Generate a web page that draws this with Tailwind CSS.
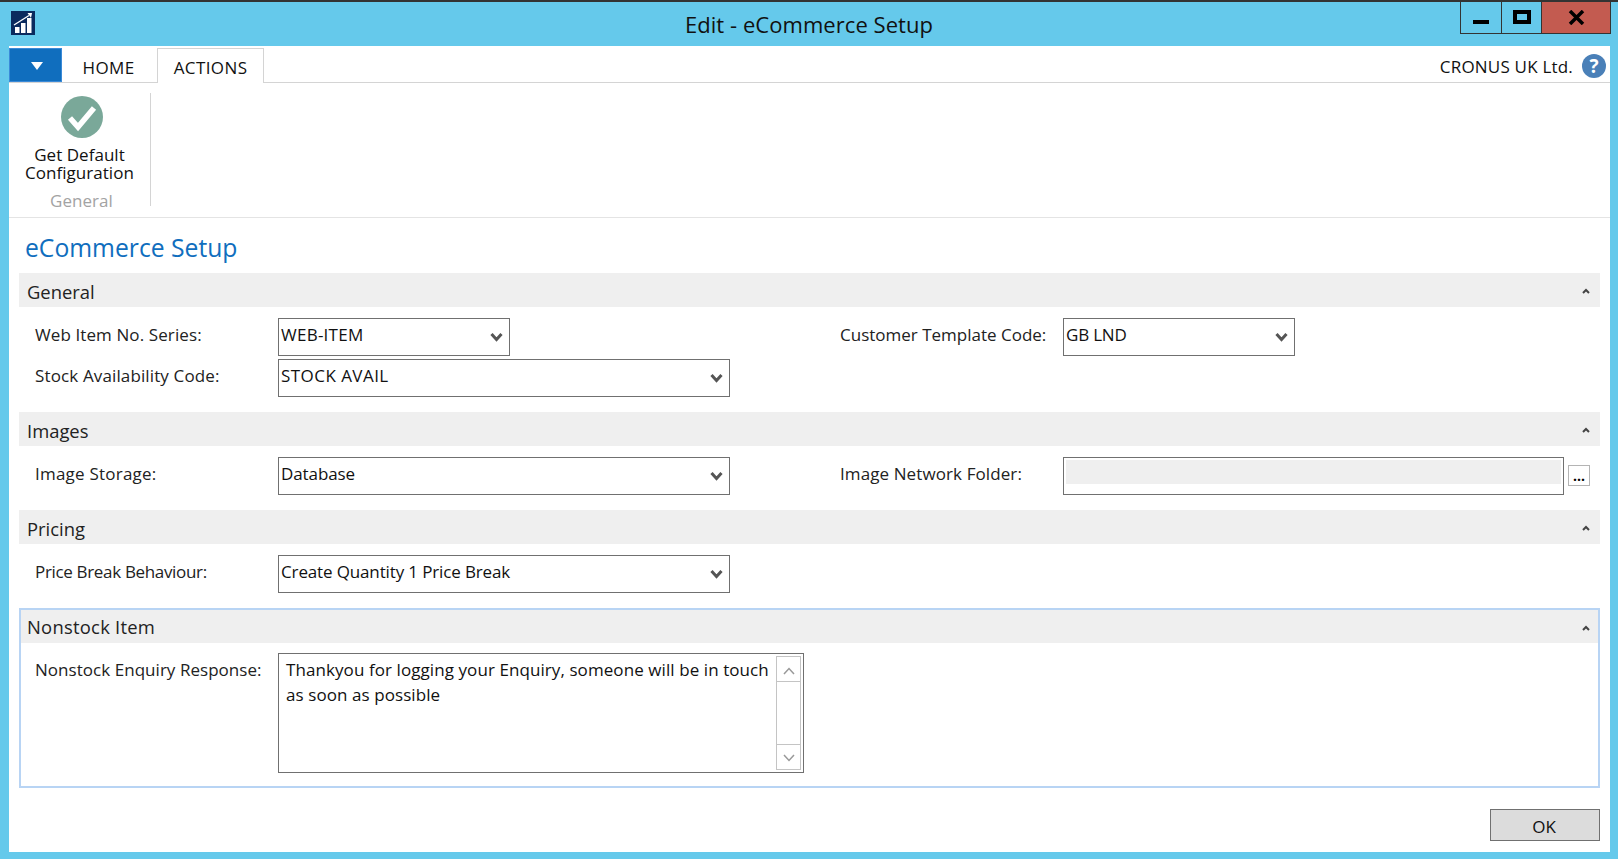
<!doctype html>
<html lang="en">

<head>
    <meta charset="UTF-8">
    <title>Edit - eCommerce Setup</title>
    <script src="https://cdn.jsdelivr.net/npm/@tailwindcss/browser@4"></script>
</head>

<body>
    <div class="w-[1618px] h-[859px] overflow-hidden flex flex-col bg-[#65c9eb] border-t-2 border-[#333333] font-['Open_Sans',sans-serif] text-[17px] text-[#222222]">
        <!-- title bar -->
        <div class="h-[44px] grid grid-cols-[1fr_auto_1fr] shrink-0">
            <div class="pl-[11px] pt-[9px]">
                <svg width="24" height="24" viewBox="0 0 24 24">
                    <rect width="24" height="24" fill="#0a2a5e" />
                    <rect x="4" y="16" width="4.500" height="6" fill="#fff" />
                    <rect x="10" y="12" width="4.500" height="10" fill="#fff" />
                    <rect x="16" y="7" width="4.500" height="15" fill="#fff" />
                    <path d="M3 14 L18 4.500" stroke="#fff" stroke-width="1.300" fill="none" />
                    <path d="M16.500 2 L21 2 L20 7 Z" fill="#fff" />
                </svg>
            </div>
            <div class="text-[22px] tracking-[0.05px] text-[#111111] leading-[45px]">Edit - eCommerce Setup</div>
            <div class="flex justify-end items-start pr-[7px]">
                <div class="w-[42px] h-[32px] border border-[#333333] border-t-0 flex justify-center items-start pt-[18px]">
                    <div class="w-[16px] h-[4px] bg-black"></div>
                </div>
                <div class="w-[39px] h-[32px] border-b border-[#333333] flex justify-center items-start pt-[8px]">
                    <div class="w-[18px] h-[14px] border-[4px] border-black"></div>
                </div>
                <div class="w-[70px] h-[32px] bg-[#c35b50] border border-t-0 border-[#333333] flex justify-center items-start pt-[8px]">
                    <svg width="17" height="15" viewBox="0 0 17 15">
                        <path d="M2 1 L15 14 M15 1 L2 14" stroke="#000" stroke-width="3.500" fill="none" />
                    </svg>
                </div>
            </div>
        </div>

        <!-- window body -->
        <div class="ml-[9px] mr-[8px] h-[806px] bg-white flex flex-col shrink-0">
            <!-- tabs -->
            <div class="h-[37px] pt-[2px] flex items-stretch border-b border-[#d4d4d4] shrink-0">
                <div class="w-[53px] bg-[#106ebe] border border-[#3a8ad8] flex items-center justify-center">
                    <svg width="12" height="8" viewBox="0 0 12 8" class="ml-[2px] mt-[2px]"><path d="M0 0 H12 L6 8 Z" fill="#fff" /></svg>
                </div>
                <div class="w-[93px] mr-[2px] text-center leading-[39px] tracking-[0.4px] text-[#111111]">HOME</div>
                <div class="w-[107px] h-[35px] text-center leading-[38px] tracking-[0.4px] text-[#111111] bg-white border border-b-0 border-[#d4d4d4]">ACTIONS</div>
                <div class="flex-1 flex justify-end items-start pr-[4px]">
                    <span class="leading-[38px] tracking-[0.2px] text-[#111111]">CRONUS UK Ltd.</span>
                    <span class="ml-[9px] mt-[6px] w-[24px] h-[24px] rounded-full bg-[#4a80b8] text-white text-[19px] font-bold leading-[24px] text-center">?</span>
                </div>
            </div>

            <!-- ribbon -->
            <div class="h-[135px] flex border-b border-[#e4e4e4] shrink-0">
                <div class="w-[141px] pt-[13px] flex flex-col items-center">
                    <svg width="42" height="42" viewBox="0 0 42 42" class="ml-[5px] shrink-0">
                        <circle cx="21" cy="21" r="21" fill="#7aa899" />
                        <path d="M9 22 L17 31 L33 12" stroke="#fff" stroke-width="5.500" fill="none" />
                    </svg>
                    <div class="mt-[8px] text-center leading-[18px] tracking-[0.03px] text-[#111111]">Get Default<br>Configuration</div>
                    <div class="mt-[9px] ml-[4px] text-[#a3a3a3] leading-[19px] tracking-[0.05px]">General</div>
                </div>
                <div class="w-px h-[113px] mt-[10px] bg-[#d4d4d4]"></div>
            </div>

            <!-- page title -->
            <div class="h-[55px] pl-[16px] pt-[10px] text-[24.7px] leading-[40px] text-[#106ebe] shrink-0">eCommerce Setup</div>

            <div class="pl-[10px] pr-[10px] flex flex-col">
                <!-- General -->
                <div class="h-[34px] bg-[#efefef] flex items-center justify-between pl-[8px] pr-[10px] text-[18.4px]">
                    <span class="mt-[4px]">General</span>
                    <svg width="8" height="6" viewBox="0 0 8 6" class="mt-[2px]"><path d="M1 5 L4 2 L7 5" stroke="#444" stroke-width="2" fill="none" /></svg>
                </div>
                <div class="pt-[11px] flex flex-col gap-[3px]">
                    <div class="flex">
                        <div class="w-[259px] pl-[16px] leading-[34px] tracking-[0.1px]">Web Item No. Series:</div>
                        <div class="w-[232px] h-[38px] border border-[#707070] pl-[2px] leading-[32px] flex justify-between text-[#111111]">
                            <span class="tracking-[0.25px]">WEB-ITEM</span>
                            <svg width="13" height="10" viewBox="0 0 13 10" class="mt-[13px] mr-[6px]"><path d="M1.500 2 L6.500 7.500 L11.500 2" stroke="#555" stroke-width="3" fill="none" /></svg>
                        </div>
                        <div class="w-[330px]"></div>
                        <div class="w-[223px] leading-[34px]">Customer Template Code:</div>
                        <div class="w-[232px] h-[38px] border border-[#707070] pl-[2px] leading-[32px] flex justify-between text-[#111111]">
                            <span class="tracking-[-0.2px]">GB LND</span>
                            <svg width="13" height="10" viewBox="0 0 13 10" class="mt-[13px] mr-[6px]"><path d="M1.500 2 L6.500 7.500 L11.500 2" stroke="#555" stroke-width="3" fill="none" /></svg>
                        </div>
                    </div>
                    <div class="flex">
                        <div class="w-[259px] pl-[16px] leading-[34px] tracking-[0.13px]">Stock Availability Code:</div>
                        <div class="w-[452px] h-[38px] border border-[#707070] pl-[2px] leading-[32px] flex justify-between text-[#111111]">
                            <span class="tracking-[0.45px]">STOCK AVAIL</span>
                            <svg width="13" height="10" viewBox="0 0 13 10" class="mt-[13px] mr-[6px]"><path d="M1.500 2 L6.500 7.500 L11.500 2" stroke="#555" stroke-width="3" fill="none" /></svg>
                        </div>
                    </div>
                </div>

                <!-- Images -->
                <div class="mt-[15px] h-[34px] bg-[#efefef] flex items-center justify-between pl-[8px] pr-[10px] text-[18.4px]">
                    <span class="mt-[4px]">Images</span>
                    <svg width="8" height="6" viewBox="0 0 8 6" class="mt-[2px]"><path d="M1 5 L4 2 L7 5" stroke="#444" stroke-width="2" fill="none" /></svg>
                </div>
                <div class="pt-[11px] flex">
                    <div class="w-[259px] pl-[16px] leading-[34px] tracking-[0.22px]">Image Storage:</div>
                    <div class="w-[452px] h-[38px] border border-[#707070] pl-[2px] leading-[32px] flex justify-between text-[#111111]">
                        <span class="tracking-[-0.1px]">Database</span>
                        <svg width="13" height="10" viewBox="0 0 13 10" class="mt-[13px] mr-[6px]"><path d="M1.500 2 L6.500 7.500 L11.500 2" stroke="#555" stroke-width="3" fill="none" /></svg>
                    </div>
                    <div class="w-[110px]"></div>
                    <div class="w-[223px] leading-[34px] tracking-[0.1px]">Image Network Folder:</div>
                    <div class="w-[501px] h-[38px] border border-[#707070] p-[2px] pb-[10px]">
                        <div class="h-full bg-[#efefef]"></div>
                    </div>
                    <div class="ml-[4px] mt-[8px] w-[22px] h-[21px] border border-[#b4b4b4] text-[14px] font-bold leading-[19px] text-center text-black">...</div>
                </div>

                <!-- Pricing -->
                <div class="mt-[15px] h-[34px] bg-[#efefef] flex items-center justify-between pl-[8px] pr-[10px] text-[18.4px]">
                    <span class="mt-[4px]">Pricing</span>
                    <svg width="8" height="6" viewBox="0 0 8 6" class="mt-[2px]"><path d="M1 5 L4 2 L7 5" stroke="#444" stroke-width="2" fill="none" /></svg>
                </div>
                <div class="pt-[11px] flex">
                    <div class="w-[259px] pl-[16px] leading-[34px] tracking-[-0.33px]">Price Break Behaviour:</div>
                    <div class="w-[452px] h-[38px] border border-[#707070] pl-[2px] leading-[32px] flex justify-between text-[#111111]">
                        <span class="tracking-[-0.14px]">Create Quantity 1 Price Break</span>
                        <svg width="13" height="10" viewBox="0 0 13 10" class="mt-[13px] mr-[6px]"><path d="M1.500 2 L6.500 7.500 L11.500 2" stroke="#555" stroke-width="3" fill="none" /></svg>
                    </div>
                </div>

                <!-- Nonstock Item -->
                <div class="mt-[15px] h-[180px] border-2 border-[#b8d4f4]">
                    <div class="h-[33px] bg-[#efefef] flex items-center justify-between pl-[6px] pr-[8px] text-[18.4px]">
                        <span class="mt-[1px] tracking-[0.25px]">Nonstock Item</span>
                        <svg width="8" height="6" viewBox="0 0 8 6" class="mt-[2px]"><path d="M1 5 L4 2 L7 5" stroke="#444" stroke-width="2" fill="none" /></svg>
                    </div>
                    <div class="pt-[10px] flex">
                        <div class="w-[257px] pl-[14px] leading-[34px] tracking-[0.04px]">Nonstock Enquiry Response:</div>
                        <div class="w-[526px] h-[120px] border border-[#707070] pl-[7px] pr-[2px] py-[2px] flex justify-between text-[#111111]">
                            <div class="leading-[25px] pt-[1px] w-[490px] tracking-[0.08px]">Thankyou for logging your Enquiry, someone will be in touch as soon as possible</div>
                            <div class="w-[25px] border border-[#c4c4c4] flex flex-col">
                                <div class="h-[25px] border-b border-[#c4c4c4] flex items-center justify-center">
                                    <svg width="12" height="8" viewBox="0 0 12 8" class="mt-[3px]"><path d="M1 7 L6 1.500 L11 7" stroke="#999" stroke-width="1.500" fill="none" /></svg>
                                </div>
                                <div class="flex-1"></div>
                                <div class="h-[25px] border-t border-[#c4c4c4] flex items-center justify-center">
                                    <svg width="12" height="8" viewBox="0 0 12 8" class="mt-[2px]"><path d="M1 1 L6 6.500 L11 1" stroke="#999" stroke-width="1.500" fill="none" /></svg>
                                </div>
                            </div>
                        </div>
                    </div>
                </div>
            </div>

            <!-- footer -->
            <div class="flex justify-end pr-[10px] pt-[21px]">
                <div class="w-[110px] h-[32px] bg-[#dcdcdc] border border-[#707070] text-center leading-[33px] pr-[2px] text-[#111111]">OK</div>
            </div>
        </div>
    </div>
</body>

</html>
